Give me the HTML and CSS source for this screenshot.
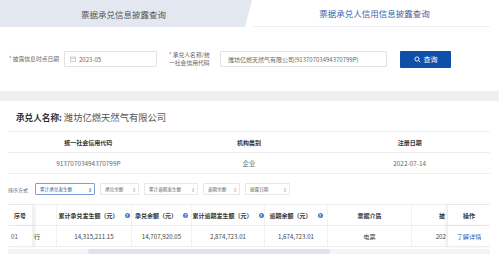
FILE: index.html
```html
<!DOCTYPE html>
<html lang="zh-CN">
<head>
    <meta charset="UTF-8">
    <meta name="viewport" content="width=device-width, initial-scale=1.0">
    <title>票据承兑人信用信息披露查询</title>
    <link rel="stylesheet" href="styles.css">
</head>
<body>

    <!-- Tabs -->
    <div class="tabs">
        <div class="tab tab-left">票据承兑信息披露查询</div>
        <div class="tab tab-right">票据承兑人信用信息披露查询</div>
    </div>

    <!-- Search form -->
    <form class="search">
        <label class="lbl lbl-date"><span class="req">*</span>披露信息时点日期</label>
        <div class="input input-date">
            <svg class="cal" width="6" height="6" viewBox="0 0 6 6">
                <rect x="0.5" y="1" width="5" height="4.5" fill="none" stroke="#bbb" stroke-width="0.7"/>
                <line x1="0.5" y1="2.4" x2="5.5" y2="2.4" stroke="#bbb" stroke-width="0.6"/>
            </svg>
            2023-05
        </div>

        <label class="lbl lbl-name"><span class="req">*</span>承兑人名称/统<br>一社会信用代码</label>
        <div class="input input-name">潍坊亿燃天然气有限公司(91370703494370799P)</div>

        <button type="button" class="btn">
            <svg width="7" height="7" viewBox="0 0 7 7">
                <circle cx="3" cy="3" r="2.1" fill="none" stroke="#fff" stroke-width="0.9"/>
                <line x1="4.6" y1="4.6" x2="6.3" y2="6.3" stroke="#fff" stroke-width="0.9"/>
            </svg>
            查询
        </button>
    </form>

    <div class="band"></div>

    <!-- Result -->
    <div class="result">
        <div class="title"><b>承兑人名称:</b> 潍坊亿燃天然气有限公司</div>

        <div class="info">
            <div class="info-head">统一社会信用代码</div>
            <div class="info-head">机构类别</div>
            <div class="info-head">注册日期</div>
            <div class="info-cell">91370703494370799P</div>
            <div class="info-cell">企业</div>
            <div class="info-cell">2022-07-14</div>
        </div>

        <div class="sort">
            <span class="sort-label">排序方式</span>
            <div class="sel sel-active" style="width:60px">累计承兑发生额<span class="arr">&#8661;</span></div>
            <div class="sel" style="width:39px">承兑余额<span class="arr">&#8661;</span></div>
            <div class="sel" style="width:54px">累计逾期发生额<span class="arr">&#8661;</span></div>
            <div class="sel" style="width:37px">逾期余额<span class="arr">&#8661;</span></div>
            <div class="sel" style="width:45px">披露日期<span class="arr">&#8661;</span></div>
        </div>

        <div class="grid">
            <div class="cell head fix-left">序号</div>
            <div class="cell head"></div>
            <div class="cell head">累计承兑发生额（元）<span class="tip">?</span></div>
            <div class="cell head">承兑余额（元）<span class="tip">?</span></div>
            <div class="cell head">累计逾期发生额（元）<span class="tip">?</span></div>
            <div class="cell head">逾期余额（元）<span class="tip">?</span></div>
            <div class="cell head">票据介质</div>
            <div class="cell head cut">披</div>
            <div class="cell head fix-right">操作</div>

            <div class="cell fix-left first">01</div>
            <div class="cell tail">行</div>
            <div class="cell">14,315,211.15</div>
            <div class="cell">14,707,920.05</div>
            <div class="cell">2,874,723.01</div>
            <div class="cell">1,674,723.01</div>
            <div class="cell">电票</div>
            <div class="cell cut cut-date">202</div>
            <div class="cell fix-right link">了解详情</div>
        </div>

        <div class="scrollbar"><div class="thumb"></div></div>
    </div>

</body>
</html>
```

FILE: styles.css
```css
body {
    margin: 0;
    width: 499px;
    font-family: "Noto Sans CJK SC", sans-serif;
    background-color: #fff;
    color: #333;
}

/* Tabs */
.tabs {
    display: flex;
    height: 27px;
}

.tab {
    display: flex;
    align-items: center;
    justify-content: center;
    font-size: 8.5px;
}

.tab-left {
    width: 252px;
    padding-right: 5px;
    box-sizing: border-box;
    background-color: #e3e7f0;
    color: #555;
    clip-path: polygon(0 0, 100% 0, 245px 100%, 0 100%);
}

.tab-right {
    flex: 1;
    margin: 0 9px 0 1px;
    padding-left: 6px;
    color: #3a65aa;
    border-bottom: 1px solid #eef0f4;
}

/* Search form */
.search {
    display: flex;
    align-items: center;
    height: 64px;
    padding: 0 0 0 9px;
    margin: 0;
    box-sizing: border-box;
}

.lbl {
    font-size: 5.8px;
    color: #666;
    line-height: 8px;
}

.req {
    color: #e34;
    margin-right: 1px;
}

.lbl-date {
    width: 50px;
    margin-right: 5px;
    white-space: nowrap;
}

.lbl-name {
    width: 46px;
    margin: 0 5px 0 12px;
    white-space: nowrap;
}

.input {
    height: 16px;
    border: 1px solid #e3e3e3;
    border-radius: 1px;
    box-sizing: border-box;
    display: flex;
    align-items: center;
    font-size: 6px;
    color: #666;
    white-space: nowrap;
    overflow: hidden;
}

.input-date {
    width: 93px;
    padding-left: 5px;
}

.cal {
    margin-right: 3px;
}

.input-name {
    width: 167px;
    padding-left: 7px;
}

.btn {
    width: 51px;
    height: 17px;
    margin-left: 13px;
    padding: 0;
    border: none;
    border-radius: 1px;
    background-color: #0f4fa7;
    color: #fff;
    font-family: inherit;
    font-size: 7px;
    display: flex;
    align-items: center;
    justify-content: center;
    gap: 3px;
}

.band {
    height: 10px;
    background-color: #f0f0f0;
}

/* Result */
.result {
    padding: 10px 9px 0 8px;
}

.title {
    font-size: 9.3px;
    line-height: 12px;
    color: #555;
    padding-left: 8px;
    margin-bottom: 8px;
}

.title b {
    color: #333;
    font-size: 8.6px;
}

.info {
    display: grid;
    grid-template-columns: 1fr 1fr 1fr;
    border-top: 1px solid #f0f0f0;
}

.info-head,
.info-cell {
    height: 21px;
    display: flex;
    align-items: center;
    justify-content: center;
    border-bottom: 1px solid #eee;
    box-sizing: border-box;
    font-size: 6px;
}

.info-head {
    color: #333;
    font-weight: bold;
}

.info-cell {
    color: #666;
    font-size: 6.4px;
}

/* Sort bar */
.sort {
    display: flex;
    align-items: center;
    gap: 5px;
    margin: 9px 0 9px 0;
    height: 12px;
}

.sort-label {
    font-size: 5px;
    color: #666;
    width: 22px;
}

.sel {
    height: 12px;
    box-sizing: border-box;
    border: 1px solid #e8e8e8;
    border-radius: 1px;
    display: flex;
    align-items: center;
    justify-content: space-between;
    padding: 0 2px 0 4px;
    font-size: 4.6px;
    color: #666;
    white-space: nowrap;
}

.sel-active {
    border-color: #7da0d8;
    color: #3b5c94;
}

.arr {
    font-size: 5px;
    color: #aaa;
}

.sel-active .arr {
    color: #555;
}

/* Data grid */
.grid {
    display: grid;
    grid-template-columns: 25px 24px 75px 60px 73px 63px 84px 36px 42px;
    border-top: 1px solid #eee;
}

.cell {
    height: 21px;
    box-sizing: border-box;
    display: flex;
    align-items: center;
    justify-content: center;
    border-right: 1px solid #f2f2f2;
    border-bottom: 1px solid #eee;
    font-size: 6.2px;
    color: #444;
    white-space: nowrap;
    overflow: hidden;
    background-color: #fff;
}

.head {
    font-weight: bold;
    color: #333;
    font-size: 6px;
}

.tip {
    display: inline-flex;
    align-items: center;
    justify-content: center;
    width: 5px;
    height: 5px;
    margin-left: 6px;
    border-radius: 50%;
    background-color: #3a7ad6;
    color: #fff;
    font-size: 4px;
    line-height: 5px;
    font-weight: bold;
}

.fix-left {
    position: relative;
    z-index: 1;
    box-shadow: 2px 0 3px rgba(0, 0, 0, 0.08);
}

.fix-right {
    position: relative;
    z-index: 1;
    border-right: none;
    box-shadow: -2px 0 3px rgba(0, 0, 0, 0.08);
}

.first {
    justify-content: flex-start;
    padding-left: 3px;
    color: #555;
}

.tail {
    justify-content: flex-start;
    padding-left: 1px;
}

.cut {
    justify-content: flex-end;
    padding-right: 3px;
    border-right: none;
}

.cut-date {
    padding-right: 2px;
}

.link {
    color: #2f5fb3;
}

.scrollbar {
    height: 5px;
    margin-top: 2px;
    background-color: #f3f4f7;
    padding-left: 80px;
    padding-right: 160px;
}

.thumb {
    height: 100%;
    background-color: #dfe3ed;
    border-radius: 2px;
}
```
